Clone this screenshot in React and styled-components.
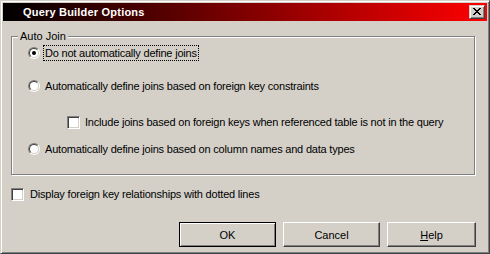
import React from "react";
import styled, { createGlobalStyle } from "styled-components";

const Global = createGlobalStyle`
  html, body { margin: 0; padding: 0; background: #d4d0c8; }
  body { font-family: "Liberation Sans", Arial, sans-serif; font-size: 11px; color: #000; }
`;

const Window = styled.div`
  box-sizing: border-box;
  width: 490px;
  height: 254px;
  background: #d4d0c8;
  border: 1px solid;
  border-color: #d4d0c8 #404040 #404040 #d4d0c8;
  box-shadow: inset 1px 1px 0 #fff, inset -1px -1px 0 #808080;
  padding: 2px;
  display: flex;
  flex-direction: column;
`;

const TitleBar = styled.div`
  height: 18px;
  flex: none;
  display: flex;
  align-items: center;
  padding: 0 2px 0 20px;
  background: linear-gradient(to right, #000000, #ff0000);
`;

const TitleText = styled.div`
  flex: 1;
  color: #fff;
  font-weight: bold;
  font-size: 11px;
  line-height: 18px;
  letter-spacing: 0.2px;
`;

const CaptionButton = styled.div`
  box-sizing: border-box;
  width: 16px;
  height: 14px;
  background: #d4d0c8;
  border: 1px solid;
  border-color: #d4d0c8 #404040 #404040 #d4d0c8;
  box-shadow: inset 1px 1px 0 #fff, inset -1px -1px 0 #808080;
  display: flex;
  padding: 2px 0 0 3px;
`;

const Content = styled.div`
  flex: 1;
  display: flex;
  flex-direction: column;
  padding: 15px 11px 0 8px;
`;

const GroupBox = styled.div`
  display: flex;
  flex-direction: column;
  margin-right: 1px;
  border: 1px solid #808080;
  box-shadow: inset 1px 1px 0 #fff, 1px 1px 0 #fff;
  padding: 0 0 18px 16px;
`;

const Legend = styled.div`
  align-self: flex-start;
  margin: -7px 0 0 -10px;
  padding: 0 2px;
  background: #d4d0c8;
  line-height: 13px;
`;

const Row = styled.div`
  display: flex;
  align-items: center;
  height: ${(p) => p.$h}px;
  margin-top: ${(p) => p.$mt}px;
  padding-left: ${(p) => p.$indent || 0}px;
`;

const RadioOuter = styled.div`
  box-sizing: border-box;
  width: 12px;
  height: 12px;
  flex: none;
  border-radius: 50%;
  border: 1px solid;
  border-color: #808080 #fff #fff #808080;
  display: flex;
`;

const RadioInner = styled.div`
  box-sizing: border-box;
  width: 10px;
  height: 10px;
  border-radius: 50%;
  border: 1px solid;
  border-color: #404040 #d4d0c8 #d4d0c8 #404040;
  background: #fff;
  display: flex;
  align-items: center;
  justify-content: center;
`;

const Dot = styled.div`
  width: 4px;
  height: 4px;
  border-radius: 50%;
  background: #000;
`;

const Check = styled.div`
  box-sizing: border-box;
  width: 13px;
  height: 13px;
  flex: none;
  background: #fff;
  border: 1px solid;
  border-color: #808080 #fff #fff #808080;
  box-shadow: inset 1px 1px 0 #404040, inset -1px -1px 0 #d4d0c8;
`;

const Label = styled.span`
  white-space: nowrap;
  line-height: ${(p) => p.$lh || 14}px;
  margin-left: ${(p) => (p.$focus ? p.$gap - 2 : p.$gap)}px;
  padding: 0 ${(p) => (p.$focus ? 1 : 0)}px;
  border: ${(p) => (p.$focus ? "1px dotted #000" : "none")};
  letter-spacing: -0.2px;
`;

const ButtonRow = styled.div`
  display: flex;
  justify-content: flex-end;
  gap: 7px;
  margin-top: 21px;
`;

const Button = styled.div`
  box-sizing: border-box;
  width: ${(p) => p.$w}px;
  height: 25px;
  display: flex;
  align-items: center;
  justify-content: center;
  background: #d4d0c8;
  border: 1px solid;
  border-color: ${(p) => (p.$default ? "#000" : "#fff #404040 #404040 #fff")};
  box-shadow: ${(p) =>
    p.$default
      ? "inset 1px 1px 0 #fff, inset -1px -1px 0 #808080"
      : "inset -1px -1px 0 #808080"};
  line-height: 14px;
`;

const Radio = ({ checked }) => (
  <RadioOuter>
    <RadioInner>{checked && <Dot />}</RadioInner>
  </RadioOuter>
);

const CloseGlyph = () => (
  <svg width="8" height="7" viewBox="0 0 8 7" shapeRendering="crispEdges">
    <path
      d="M0 0h2v1H0z M6 0h2v1H6z M1 1h2v1H1z M5 1h2v1H5z M2 2h4v1H2z M3 3h2v1H3z M2 4h4v1H2z M1 5h2v1H1z M5 5h2v1H5z M0 6h2v1H0z M6 6h2v1H6z"
      fill="#000"
    />
  </svg>
);

export default function App() {
  return (
    <>
      <Global />
      <Window>
        <TitleBar>
          <TitleText>Query Builder Options</TitleText>
          <CaptionButton>
            <CloseGlyph />
          </CaptionButton>
        </TitleBar>
        <Content>
          <GroupBox>
            <Legend>Auto Join</Legend>
            <Row $h={16} $mt={2}>
              <Radio checked />
              <Label $focus $gap={5}>Do not automatically define joins</Label>
            </Row>
            <Row $h={14} $mt={18}>
              <Radio />
              <Label $gap={5}>Automatically define joins based on foreign key constraints</Label>
            </Row>
            <Row $h={13} $mt={23} $indent={39}>
              <Check />
              <Label $gap={5} $lh={13}>
                Include joins based on foreign keys when referenced table is not in the query
              </Label>
            </Row>
            <Row $h={14} $mt={13}>
              <Radio />
              <Label $gap={5}>Automatically define joins based on column names and data types</Label>
            </Row>
          </GroupBox>
          <Row $h={13} $mt={13}>
            <Check />
            <Label $gap={6} $lh={13}>Display foreign key relationships with dotted lines</Label>
          </Row>
          <ButtonRow>
            <Button $w={97} $default>OK</Button>
            <Button $w={97}>Cancel</Button>
            <Button $w={89}>
              <span>
                <u>H</u>elp
              </span>
            </Button>
          </ButtonRow>
        </Content>
      </Window>
    </>
  );
}
